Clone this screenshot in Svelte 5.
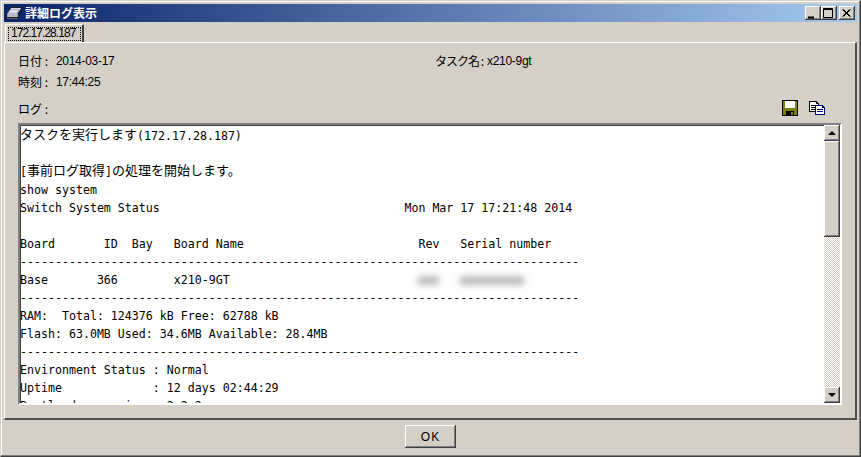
<script>
  const lines = [
    [{ j: 'タスクを実行します' }, '(172.17.28.187)'],
    [''],
    ['[', { j: '事前ログ取得' }, ']', { j: 'の処理を開始します。' }],
    ['show system'],
    ['Switch System Status                                   Mon Mar 17 17:21:48 2014'],
    [''],
    ['Board       ID  Bay   Board Name                         Rev   Serial number'],
    ['-'.repeat(80)],
    ['Base       366        x210-9GT                           ', { b: 21 }, '   ', { b: 64 }],
    ['-'.repeat(80)],
    ['RAM:  Total: 124376 kB Free: 62788 kB'],
    ['Flash: 63.0MB Used: 34.6MB Available: 28.4MB'],
    ['-'.repeat(80)],
    ['Environment Status : Normal'],
    ['Uptime             : 12 days 02:44:29'],
    ['Bootloader version : 2.2.2'],
    ['']
  ];
</script>

<div class="window">
  <div class="title">
    <svg class="appicon" width="17" height="15" viewBox="0 0 17 15">
      <path d="M5 1.5H16L12 7.5V11.5H1V7.5Z" fill="#d8d8e8" stroke="#202020" />
      <path d="M4 4H13L11 7H2Z" fill="#f4f4ff" stroke="#8088a8" stroke-width=".7" />
      <path d="M1.5 8H11.5V11H1.5Z" fill="#b8bcc8" />
      <path d="M12 11.5L16 6V1.5" fill="none" stroke="#202020" />
      <path d="M1 12.5H11" stroke="#606060" />
    </svg>
    <span class="caption">詳細ログ表示</span>
    <div class="controls">
      <button class="ctl" aria-label="最小化"><svg width="15" height="13" viewBox="0 0 15 13"><path d="M3 9.5H9V11.5H3Z" fill="#000" /></svg></button>
      <button class="ctl" aria-label="最大化"><svg width="15" height="13" viewBox="0 0 15 13"><path d="M2.5 1.5H11.5V10.5H2.5Z M2.5 2.5H11.5" fill="none" stroke="#000" /></svg></button>
      <button class="ctl close" aria-label="閉じる"><svg width="15" height="13" viewBox="0 0 15 13"><path d="M3.5 2.5L10.5 9.5M4.5 2.5L11.5 9.5M10.5 2.5L3.5 9.5M11.5 2.5L4.5 9.5" stroke="#000" fill="none" /></svg></button>
    </div>
  </div>

  <div class="tabs">
    <div class="tab"><span class="focus">172.17.28.187</span></div>
  </div>

  <div class="panel">
    <div class="info">
      <div class="field"><span class="lab">日付 :</span><span>2014-03-17</span></div>
      <div class="field task"><span class="lab">タスク名 :</span><span>x210-9gt</span></div>
      <div class="field"><span class="lab">時刻 :</span><span>17:44:25</span></div>
    </div>

    <div class="logbar">
      <span class="lab">ログ :</span>
      <div class="tools">
        <svg width="16" height="16" viewBox="0 0 16 16" shape-rendering="crispEdges">
          <path d="M0 0H15L16 1V16H0Z" fill="#000" />
          <path d="M1 1H15V15H1Z" fill="#808000" />
          <path d="M3 1H13V8H3Z" fill="#fff" />
          <path d="M4 11H12V15H4Z" fill="#000" />
          <path d="M9 12H11V15H9Z" fill="#808000" />
        </svg>
        <svg width="16" height="14" viewBox="0 0 16 14" shape-rendering="crispEdges">
          <path d="M0 0H7L10 3V11H0Z" fill="#000" />
          <path d="M1 1H7V3H9V10H1Z" fill="#fff" />
          <path d="M2 4H7V5H2ZM2 6H7V7H2ZM2 8H7V9H2Z" fill="#000" />
          <path d="M6 4H13L16 7V14H6Z" fill="#000080" />
          <path d="M7 5H13V7H15V13H7Z" fill="#fff" />
          <path d="M8 8H14V9H8ZM8 10H14V11H8Z" fill="#000080" />
        </svg>
      </div>
    </div>

    <div class="logbox">
      <div class="text">
        {#each lines as line}
          <div class="line">{#each line as part}{#if typeof part === 'string'}{part}{:else if part.j}<span class="jp">{part.j}</span>{:else}<span class="blur" style:width="{part.b}px"></span>{/if}{/each}</div>
        {/each}
      </div>
      <div class="scroll">
        <div class="sbtn"><span class="up"></span></div>
        <div class="thumb"></div>
        <div class="track"></div>
        <div class="sbtn"><span class="down"></span></div>
      </div>
    </div>
  </div>

  <div class="footer">
    <button class="ok">OK</button>
  </div>
</div>

<style>
  :global(body) {
    margin: 0;
    background: #d4d0c8;
  }
  .window {
    box-sizing: border-box;
    width: 861px;
    height: 457px;
    background: #d4d0c8;
    padding: 3px;
    display: flex;
    flex-direction: column;
    border-style: solid;
    border-width: 1px;
    border-color: #d4d0c8 #404040 #404040 #d4d0c8;
    box-shadow: inset -1px -1px 0 #808080, inset 1px 1px 0 #fff;
    font-family: "Liberation Sans", "Noto Sans CJK JP", sans-serif;
    font-size: 12px;
    color: #000;
    overflow: hidden;
  }
  .title {
    height: 18px;
    flex: none;
    display: flex;
    align-items: center;
    background: linear-gradient(90deg, #0a246a, #a6caf0);
    color: #fff;
  }
  .appicon {
    margin-left: 2px;
    flex: none;
  }
  .caption {
    margin-left: 2px;
    font-family: "Noto Sans CJK JP", sans-serif;
    font-size: 12px;
    font-weight: 700;
    line-height: 18px;
  }
  .controls {
    margin-left: auto;
    margin-right: 2px;
    display: flex;
  }
  .ctl {
    width: 16px;
    height: 14px;
    padding: 0;
    margin: 0;
    background: #d4d0c8;
    border: none;
    box-shadow: inset -1px -1px 0 #404040, inset 1px 1px 0 #fff, inset -2px -2px 0 #808080;
    display: block;
    line-height: 0;
  }
  .ctl svg {
    display: block;
  }
  .close {
    margin-left: 2px;
  }
  .tabs {
    height: 20px;
    flex: none;
    padding: 2px 0 0 1px;
    box-sizing: border-box;
    display: flex;
  }
  .tab {
    box-sizing: border-box;
    width: 79px;
    height: 18px;
    border: 1px solid #fff;
    border-bottom: none;
    border-right: 2px solid #404040;
    padding: 2px 1px 0 2px;
    border-radius: 2px 2px 0 0;
  }
  .focus {
    display: block;
    box-sizing: border-box;
    height: 14px;
    padding-left: 3px;
    line-height: 13px;
    outline: 1px dotted #000;
    outline-offset: -1px;
    letter-spacing: -0.95px;
    font-size: 12px;
    white-space: nowrap;
  }
  .panel {
    box-sizing: border-box;
    height: 378px;
    flex: none;
    border-style: solid;
    border-width: 1px 2px 2px 1px;
    border-color: #fff #505050 #505050 #fff;
    padding-left: 13px;
    padding-right: 13px;
  }
  .info {
    padding-top: 7px;
    display: grid;
    grid-template-columns: 417px 1fr;
    grid-auto-rows: 21px;
  }
  .field {
    display: flex;
    align-items: center;
    letter-spacing: -0.3px;
    white-space: nowrap;
  }
  .lab {
    font-family: "Noto Sans CJK JP", sans-serif;
    font-size: 12px;
    width: 38px;
    flex: none;
    white-space: nowrap;
    letter-spacing: 0;
  }
  .task .lab {
    width: 52px;
    letter-spacing: -1px;
  }
  .logbar {
    height: 31px;
    box-sizing: border-box;
    padding-top: 8px;
    display: flex;
    align-items: flex-start;
  }
  .tools {
    margin-left: auto;
    display: flex;
    gap: 11px;
    padding-right: 17px;
    align-items: center;
  }
  .tools svg {
    display: block;
  }
  .logbox {
    box-sizing: border-box;
    width: 824px;
    height: 282px;
    display: flex;
    background: #fff;
    border-style: solid;
    border-width: 2px;
    border-color: #808080 #fff #fff #808080;
    box-shadow: inset 1px 1px 0 #404040;
  }
  .text {
    flex: 1;
    min-width: 0;
    overflow: hidden;
    padding-top: 2px;
    font-family: "DejaVu Sans Mono", monospace;
    font-size: 11.62px;
    line-height: 18px;
    white-space: pre;
  }
  .line {
    height: 18px;
  }
  .jp {
    font-family: "Noto Sans CJK JP", sans-serif;
    font-size: 13px;
    line-height: 1;
    vertical-align: 1px;
  }
  .blur {
    display: inline-block;
    height: 9px;
    background: #bcbcbc;
    filter: blur(3px);
    vertical-align: -1px;
  }
  .scroll {
    width: 16px;
    flex: none;
    display: flex;
    flex-direction: column;
  }
  .sbtn,
  .thumb {
    background: #d4d0c8;
    box-shadow: inset -1px -1px 0 #404040, inset 1px 1px 0 #fff, inset -2px -2px 0 #808080;
  }
  .sbtn {
    height: 16px;
    flex: none;
    display: flex;
    align-items: center;
    justify-content: center;
  }
  .thumb {
    height: 96px;
    flex: none;
  }
  .track {
    flex: 1;
    background: repeating-conic-gradient(#fff 0 25%, #d4d0c8 0 50%) 0 0 / 2px 2px;
  }
  .up,
  .down {
    width: 0;
    height: 0;
    border-left: 4px solid transparent;
    border-right: 4px solid transparent;
  }
  .up {
    border-bottom: 4px solid #000;
  }
  .down {
    border-top: 4px solid #000;
  }
  .footer {
    flex: 1;
    display: flex;
    justify-content: center;
    padding-top: 5px;
  }
  .ok {
    box-sizing: border-box;
    width: 51px;
    height: 23px;
    padding: 0;
    border: none;
    background: #d4d0c8;
    box-shadow: inset -1px -1px 0 #404040, inset 1px 1px 0 #fff, inset -2px -2px 0 #808080;
    font-family: "Liberation Sans", sans-serif;
    font-size: 12px;
    letter-spacing: 1px;
    color: #000;
  }
</style>
